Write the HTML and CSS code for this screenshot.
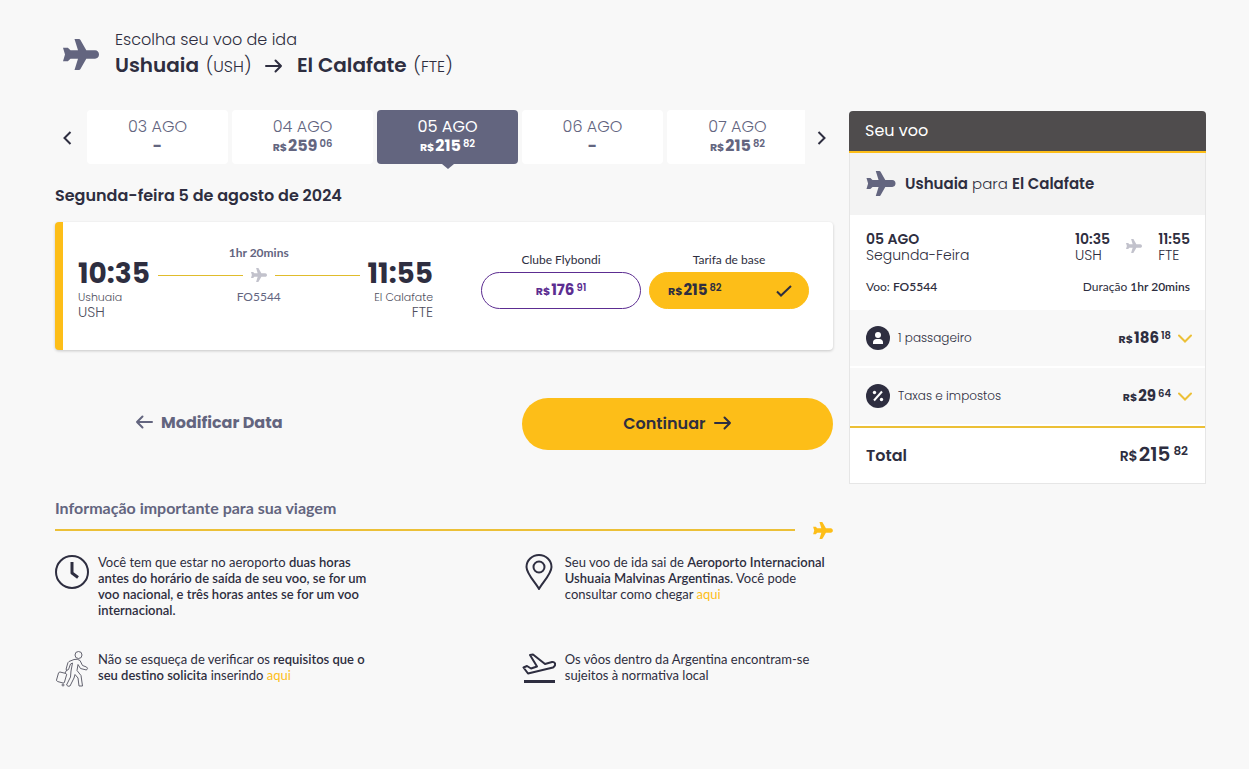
FILE: index.html
```html
<!DOCTYPE html>
<html lang="pt-BR">
<head>
    <meta charset="UTF-8">
    <meta name="viewport" content="width=device-width, initial-scale=1.0">
    <title>Escolha seu voo</title>
    <link rel="stylesheet" href="styles.css">
</head>
<body>
    <!-- shared icons -->
    <svg class="sprite" aria-hidden="true">
        <symbol id="plane" viewBox="0 0 36 31">
            <path d="M11.500 0h4.500c.6 0 1 .2 1.300.7L23.300 11.300H32c2.400 0 4 1.900 4 4.200s-1.600 4.200-4 4.200h-8.700L17.300 30.300c-.3.500-.7.700-1.300.7h-4.500l3.500-11.300H7.500L4.800 22.300H0l2-6.800-2-6.800h4.800l2.700 2.600H15z"/>
        </symbol>
        <symbol id="arrow" viewBox="0 0 18 14">
            <path d="M1 7h15M10.500 1.500 16 7l-5.500 5.500" fill="none" stroke="currentColor" stroke-width="2" stroke-linecap="round" stroke-linejoin="round"/>
        </symbol>
        <symbol id="chevron" viewBox="0 0 14 9">
            <path d="M1 1.500l6 6 6-6" fill="none" stroke="currentColor" stroke-width="2" stroke-linecap="round"/>
        </symbol>
    </svg>

    <div class="container">
        <header class="heading">
            <svg class="heading-icon"><use href="#plane"/></svg>
            <div>
                <p class="heading-title">Escolha seu voo de ida</p>
                <h1>Ushuaia <span>(<small>USH</small>)</span> <svg class="arrow"><use href="#arrow"/></svg> El Calafate <span>(<small>FTE</small>)</span></h1>
            </div>
        </header>

        <div class="columns">
            <main>
                <div class="dates">
                    <button type="button" class="nav" aria-label="Anterior"><svg viewBox="0 0 9 14"><path d="M7.500 1l-6 6 6 6"/></svg></button>
                    <div class="dates-list">
                        <button type="button" class="date">03 AGO<b>-</b></button>
                        <button type="button" class="date">04 AGO<b class="price"><small>R$</small>259<sup>06</sup></b></button>
                        <button type="button" class="date active">05 AGO<b class="price"><small>R$</small>215<sup>82</sup></b></button>
                        <button type="button" class="date">06 AGO<b>-</b></button>
                        <button type="button" class="date">07 AGO<b class="price"><small>R$</small>215<sup>82</sup></b></button>
                    </div>
                    <button type="button" class="nav next" aria-label="Seguinte"><svg viewBox="0 0 9 14"><path d="M1.500 1l6 6-6 6"/></svg></button>
                </div>

                <h2>Segunda-feira 5 de agosto de 2024</h2>

                <section class="flight">
                    <div class="stop">
                        <strong>10:35</strong>
                        <span>Ushuaia</span>
                        <span class="code">USH</span>
                    </div>
                    <div class="path">
                        <b>1hr 20mins</b>
                        <div class="path-line"><svg><use href="#plane"/></svg></div>
                        <span>FO5544</span>
                    </div>
                    <div class="stop stop-end">
                        <strong>11:55</strong>
                        <span>El Calafate</span>
                        <span class="code">FTE</span>
                    </div>
                    <div class="fares">
                        <div class="fare">
                            <span id="fare-club">Clube Flybondi</span>
                            <button type="button" class="fare-btn" aria-describedby="fare-club"><b class="price"><small>R$</small>176<sup>91</sup></b></button>
                        </div>
                        <div class="fare">
                            <span id="fare-base">Tarifa de base</span>
                            <button type="button" class="fare-btn selected" aria-describedby="fare-base">
                                <b class="price"><small>R$</small>215<sup>82</sup></b>
                                <svg viewBox="0 0 16 12"><path d="M1 6.500l4 4L15 1"/></svg>
                            </button>
                        </div>
                    </div>
                </section>

                <div class="actions">
                    <div class="back-wrap">
                        <button type="button" class="back"><svg class="arrow"><use href="#arrow"/></svg>Modificar Data</button>
                    </div>
                    <button type="button" class="continue">Continuar<svg class="arrow"><use href="#arrow"/></svg></button>
                </div>

                <section class="info">
                    <h3>Informação importante para sua viagem</h3>
                    <div class="info-line"><svg><use href="#plane"/></svg></div>
                    <div class="info-grid">
                        <div class="info-item">
                            <svg viewBox="0 0 34 36"><circle cx="17" cy="18" r="16"/><path d="M17 8v11l6 4.500" class="thick"/></svg>
                            <p>Você tem que estar no aeroporto <b>duas horas antes do horário de saída de seu voo, se for um voo nacional, e três horas antes se for um voo internacional.</b></p>
                        </div>
                        <div class="info-item">
                            <svg viewBox="0 0 34 36"><path d="M17 35C14 29 4.500 20 4.500 13a12.500 12 0 0 1 25 0c0 7-9.500 16-12.500 22z"/><circle cx="17" cy="13" r="5.500"/></svg>
                            <p>Seu voo de ida sai de <b>Aeroporto Internacional Ushuaia Malvinas Argentinas</b>. Você pode consultar como chegar <a href="#">aqui</a></p>
                        </div>
                        <div class="info-item">
                            <svg class="thin" viewBox="0 0 34 36">
                                <circle cx="23.500" cy="4" r="3.500"/>
                                <path d="M19 8.500L14 10.500Q13 11 12.500 13L11 18.500Q12 20 13.500 18.500L15.500 13 17.500 12 16 20 15.500 26 11.500 34Q13 36 15 35L19 27 20 23.500 23 27 24 35H27.500L26 24.500 22 19.500 23 13.500 25.500 17.500 31.500 19Q33.500 17 31.500 16L27.500 14.500 25 9.500Q22.500 7.500 19 8.500z"/>
                                <path d="M5 21l6 1.500q1 .5.500 1.500L9.500 31q-.5 1.500-1.500 1l-5.500-1.500q-1-.5-1-1.500l2-7Q4 21 5 21zM10 22l2-3.500"/>
                                <circle cx="8" cy="34" r="1"/>
                            </svg>
                            <p>Não se esqueça de verificar os <b>requisitos que o seu destino solicita</b> inserindo <a href="#">aqui</a></p>
                        </div>
                        <div class="info-item">
                            <svg viewBox="0 0 34 36"><path d="M1.500 16.500L5 15l4 2.500 6-2L8 4l3-.5L23 13l7-2c4-.5 4 4 1 5.500L6 22.500z"/><path d="M2 30.500h31" class="thick"/></svg>
                            <p>Os vôos dentro da Argentina encontram-se sujeitos à normativa local</p>
                        </div>
                    </div>
                </section>
            </main>

            <aside class="summary">
                <h2>Seu voo</h2>
                <div class="route">
                    <svg><use href="#plane"/></svg>
                    <p><b>Ushuaia</b> para <b>El Calafate</b></p>
                </div>
                <div class="details">
                    <div class="row">
                        <p><b>05 AGO</b><br>Segunda-Feira</p>
                        <div class="times">
                            <p><b>10:35</b><br>USH</p>
                            <svg><use href="#plane"/></svg>
                            <p><b>11:55</b><br>FTE</p>
                        </div>
                    </div>
                    <div class="row meta">
                        <span>Voo: <b>FO5544</b></span>
                        <span>Duração <b>1hr 20mins</b></span>
                    </div>
                </div>
                <button type="button" class="item">
                    <svg class="badge" viewBox="0 0 24 24"><circle cx="12" cy="12" r="12"/><circle cx="12" cy="9" r="3" class="white"/><path class="white" d="M7 18v-1.500c0-2 1.500-3.500 3.500-3.500h3c2 0 3.500 1.500 3.500 3.500V18z"/></svg>
                    <span>1 passageiro</span>
                    <b class="price"><small>R$</small>186<sup>18</sup></b>
                    <svg class="chevron"><use href="#chevron"/></svg>
                </button>
                <button type="button" class="item">
                    <svg class="badge" viewBox="0 0 24 24"><circle cx="12" cy="12" r="12"/><path d="M8 16.500l8-9" class="slash"/><circle cx="8.500" cy="8.500" r="1.700" class="white"/><circle cx="15.500" cy="15.500" r="1.700" class="white"/></svg>
                    <span>Taxas e impostos</span>
                    <b class="price"><small>R$</small>29<sup>64</sup></b>
                    <svg class="chevron"><use href="#chevron"/></svg>
                </button>
                <div class="total">
                    <b>Total</b>
                    <b class="price big"><small>R$</small>215<sup>82</sup></b>
                </div>
            </aside>
        </div>
    </div>
</body>
</html>
```

FILE: styles.css
```css
* {
    box-sizing: border-box;
}
body {
    margin: 0;
    background: #f8f8f8;
    color: #2e2e40;
    font-family: Poppins, Inter, sans-serif;
    font-size: 16px;
}
h1, h2, h3, p {
    margin: 0;
}
button {
    font: inherit;
    color: inherit;
    background: none;
    border: 0;
    padding: 0;
    cursor: pointer;
}
svg {
    fill: currentColor;
    flex: none;
}
.sprite {
    display: none;
}
.container {
    max-width: 1260px;
    margin: 0 auto;
    padding: 28px 43px 28px 55px;
}
.arrow {
    width: 18px;
    height: 14px;
}

/* heading */
.heading {
    display: flex;
    align-items: center;
    gap: 16px;
    padding-left: 8px;
    margin-bottom: 30px;
}
.heading-icon {
    width: 36px;
    height: 31px;
    color: #63657f;
}
.heading-title {
    font-weight: 300;
    line-height: 24px;
}
h1 {
    font-size: 20px;
    font-weight: 600;
    line-height: 26px;
}
h1 span {
    font-size: 18px;
    font-weight: 300;
    margin-left: 2px;
}
h1 small {
    font-size: 16px;
}
h1 .arrow {
    margin: 0 9px;
    vertical-align: -1px;
}

.columns {
    display: grid;
    grid-template-columns: minmax(0, 1fr) 357px;
    gap: 16px;
    align-items: start;
}

/* prices */
.price {
    display: inline-flex;
    align-items: baseline;
    font-size: 15px;
    font-weight: 700;
    line-height: 18px;
}
.price small {
    font-size: 11px;
    margin-right: 1px;
}
.price sup {
    align-self: flex-start;
    font-size: 10px;
    font-weight: 600;
    line-height: 14px;
    margin-left: 2px;
}
.date .price {
    font-size: 16px;
}
.price.big {
    font-size: 20px;
    line-height: 24px;
}
.price.big small {
    font-size: 14px;
}
.price.big sup {
    font-size: 12px;
    line-height: 18px;
    margin-left: 3px;
}

/* dates */
.dates {
    display: flex;
    align-items: flex-start;
}
.nav {
    width: 32px;
    height: 54px;
    flex: none;
    padding-right: 8px;
}
.nav.next {
    width: 28px;
    padding: 0 0 0 4px;
}
.nav svg {
    width: 9px;
    height: 14px;
    fill: none;
    stroke: #2e2e40;
    stroke-width: 2;
    vertical-align: middle;
}
.dates-list {
    display: flex;
    flex: 1;
    gap: 4px;
    overflow: hidden;
    padding-bottom: 8px;
}
.date {
    position: relative;
    flex: 0 0 141px;
    display: flex;
    flex-direction: column;
    align-items: center;
    padding: 7px 0 8px;
    background: #fff;
    border-radius: 4px;
    color: #63657f;
    font-weight: 300;
    line-height: 20px;
}
.date b {
    font-weight: 700;
    line-height: 18px;
}
.date.active {
    background: #63657f;
    color: #fff;
    font-weight: 400;
}
.date.active::after {
    content: "";
    position: absolute;
    top: 100%;
    left: 50%;
    margin-left: -6px;
    border: 6px solid transparent;
    border-top: 5px solid #63657f;
    border-bottom: 0;
}
main h2 {
    font-size: 16px;
    font-weight: 600;
    line-height: 24px;
    margin: 12px 0 14px;
}

/* flight */
.flight {
    display: flex;
    align-items: flex-start;
    min-height: 128px;
    padding: 21px 24px 24px 15px;
    background: #fff;
    border-left: 8px solid #fdbe18;
    border-radius: 4px;
    box-shadow: 0 1px 3px rgba(0, 0, 0, 0.2);
}
.stop {
    display: flex;
    flex-direction: column;
    margin-top: 15px;
    color: #4f4f60;
    font-size: 11px;
    font-weight: 300;
    line-height: 15px;
}
.stop strong {
    color: #2e2e40;
    font-size: 28px;
    font-weight: 700;
    line-height: 32px;
}
.stop .code {
    font-size: 14px;
}
.stop-end {
    align-items: flex-end;
}
.path {
    flex: 1;
    display: flex;
    flex-direction: column;
    align-items: center;
    padding: 0 8px;
    color: #63657f;
    font-family: Lato, sans-serif;
    font-size: 12px;
    line-height: 20px;
}
.path-line {
    align-self: stretch;
    display: flex;
    align-items: center;
    gap: 8px;
    height: 24px;
    color: #c2c2cc;
}
.path-line::before,
.path-line::after {
    content: "";
    flex: 1;
    border-top: 1px solid #e0bc2c;
}
.path-line svg {
    width: 16px;
    height: 14px;
}
.fares {
    display: flex;
    gap: 8px;
    margin: 5px 0 0 48px;
}
.fare {
    width: 160px;
    text-align: center;
    font-family: Lato, sans-serif;
    font-size: 12px;
    line-height: 24px;
}
.fare-btn {
    display: flex;
    align-items: center;
    justify-content: center;
    width: 100%;
    height: 37px;
    border: 1px solid #5c2d91;
    border-radius: 20px;
    color: #5c2d91;
    font-family: Poppins, Inter, sans-serif;
}
.fare-btn.selected {
    justify-content: space-between;
    padding: 0 16px 0 18px;
    background: #fdbe18;
    border-color: #fdbe18;
    color: #2e2e40;
}
.fare-btn svg {
    width: 16px;
    height: 12px;
    fill: none;
    stroke: currentColor;
    stroke-width: 2;
}

/* actions */
.actions {
    display: grid;
    grid-template-columns: minmax(0, 1fr) 40%;
    margin: 48px 0;
}
.back-wrap {
    display: flex;
    align-items: center;
    padding: 0 0 4px 80px;
}
.back {
    display: flex;
    align-items: center;
    gap: 8px;
    color: #63657f;
    font-weight: 700;
}
.back .arrow {
    transform: rotate(180deg);
}
.continue {
    display: flex;
    align-items: center;
    justify-content: center;
    gap: 8px;
    height: 52px;
    padding-bottom: 2px;
    background: #fdbe18;
    border-radius: 26px;
    font-weight: 600;
}

/* info */
.info {
    font-family: Lato, sans-serif;
}
.info h3 {
    color: #63657f;
    font-size: 16px;
    font-weight: 700;
    line-height: 20px;
}
.info-line {
    display: flex;
    align-items: center;
    gap: 18px;
    height: 24px;
    color: #fdbe18;
}
.info-line::before {
    content: "";
    flex: 1;
    height: 2px;
    background: #ecc037;
}
.info-line svg {
    width: 20px;
    height: 17px;
}
.info-grid {
    display: grid;
    grid-template-columns: 3fr 2fr;
    row-gap: 33px;
    margin-top: 12px;
}
.info-item {
    display: flex;
    align-items: flex-start;
    gap: 9px;
}
.info-item svg {
    width: 34px;
    height: 36px;
    fill: none;
    stroke: #2e2e40;
    stroke-width: 2;
    stroke-linejoin: round;
}
.info-item .thick {
    stroke-width: 3;
}
.info-item .thin {
    stroke: #63636f;
    stroke-width: 1;
}
.info-item p {
    max-width: 272px;
    font-size: 13px;
    line-height: 16px;
}
.info-item b {
    font-weight: 600;
}
.info-item a {
    color: #fdbe18;
    text-decoration: none;
}

/* summary */
.summary {
    margin-top: 1px;
    background: #fff;
    border: 1px solid #e6e6e6;
    border-top: 0;
    border-radius: 4px 4px 0 0;
}
.summary h2 {
    margin: 0 -1px;
    padding: 8px 16px;
    background: #4f4c4d;
    border-bottom: 2px solid #fdbe18;
    border-radius: 4px 4px 0 0;
    color: #fff;
    font-size: 16px;
    font-weight: 400;
    line-height: 24px;
}
.route {
    display: flex;
    align-items: center;
    gap: 9px;
    padding: 18px 16px 19px;
    background: #f3f3f3;
    font-size: 15px;
    font-weight: 300;
    line-height: 24px;
}
.route b {
    font-weight: 600;
}
.route svg {
    width: 30px;
    height: 25px;
    color: #63657f;
}
.details {
    padding: 16px 15px 15px 16px;
    font-size: 14px;
    font-weight: 300;
    line-height: 16px;
}
.details b {
    font-weight: 600;
}
.row {
    display: flex;
    justify-content: space-between;
}
.times {
    display: flex;
    gap: 16px;
}
.times svg {
    width: 16px;
    height: 14px;
    margin-top: 8px;
    color: #c2c2cc;
}
.meta {
    margin-top: 16px;
    font-family: Lato, sans-serif;
    font-size: 12px;
    font-weight: 400;
}
.item {
    display: flex;
    align-items: center;
    width: 100%;
    height: 58px;
    padding: 0 13px 0 16px;
    background: #f8f8f8;
    border-bottom: 2px solid #fff;
    font-size: 12px;
    font-weight: 300;
    text-align: left;
}
.item span {
    flex: 1;
    padding-left: 8px;
}
.badge {
    width: 24px;
    height: 24px;
}
.badge .white {
    fill: #fff;
}
.badge .slash {
    stroke: #fff;
    stroke-width: 2;
}
.chevron {
    width: 14px;
    height: 9px;
    margin-left: 7px;
    color: #ecc037;
}
.total {
    display: flex;
    align-items: center;
    justify-content: space-between;
    padding: 14px 17px 15px 16px;
    border-top: 2px solid #ecc037;
}
.total > b {
    font-weight: 600;
}
```
